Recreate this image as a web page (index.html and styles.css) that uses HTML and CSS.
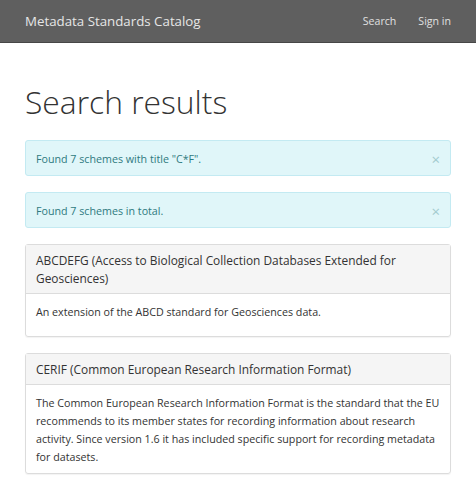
FILE: index.html
```html
<!DOCTYPE html>
<html>
<head>
<meta charset="utf-8">
<link rel="stylesheet" href="styles.css">
</head>
<body>
<nav class="navbar">
  <a class="brand" href="#">Metadata Standards Catalog</a>
  <ul class="nav">
    <li><a href="#">Search</a></li>
    <li><a href="#">Sign in</a></li>
  </ul>
</nav>
<main class="container">
  <h1 class="title">Search results</h1>
  <div class="alert"><span>Found 7 schemes with title "C*F".</span><button class="close">&times;</button></div>
  <div class="alert"><span>Found 7 schemes in total.</span><button class="close">&times;</button></div>
  <div class="panel">
    <div class="panel-heading">ABCDEFG (Access to Biological Collection Databases Extended for Geosciences)</div>
    <div class="panel-body"><p>An extension of the ABCD standard for Geosciences data.</p></div>
  </div>
  <div class="panel">
    <div class="panel-heading">CERIF (Common European Research Information Format)</div>
    <div class="panel-body panel-body-compact"><p>The Common European Research Information Format is the standard that the EU recommends to its member states for recording information about research activity. Since version 1.6 it has included specific support for recording metadata for datasets.</p></div>
  </div>
</main>
</body>
</html>
```
FILE: styles.css
```css
* { box-sizing: border-box; }
html, body { margin: 0; padding: 0; }
body {
  font-family: "Open Sans", "DejaVu Sans", sans-serif;
  font-size: 10.7px;
  line-height: 18px;
  color: #333;
  background: #fff;
}
.navbar {
  height: 43px;
  background: #5f5f5f;
  border-bottom: 1px solid #474747;
  display: flex;
  align-items: center;
  justify-content: space-between;
  padding: 0 25px;
}
.brand {
  color: #e6e6e6;
  font-size: 13.3px;
  text-decoration: none;
}
.nav {
  list-style: none;
  margin: 0;
  padding: 0;
  display: flex;
  gap: 22px;
}
.nav a {
  color: #e0e0e0;
  text-decoration: none;
  font-size: 10.6px;
}
.container {
  padding: 0 25px;
}
.title {
  font-size: 31.8px;
  font-weight: 300;
  line-height: 38px;
  margin: 40px 0 19px;
  color: #333;
}
.alert {
  display: flex;
  justify-content: space-between;
  align-items: center;
  background: #e0f6f9;
  border: 1px solid #c3eaf2;
  border-radius: 3px;
  color: #2f7a80;
  padding: 9px 10px 7px;
  margin-bottom: 16px;
}
.close {
  border: 0;
  background: none;
  padding: 0;
  font-family: inherit;
  font-size: 15px;
  line-height: 18px;
  color: #a3cbcf;
  cursor: pointer;
}
.panel {
  border: 1px solid #dcdcdc;
  border-radius: 3px;
  margin-bottom: 16px;
  box-shadow: 0 1px 1px rgba(0,0,0,.05);
}
.panel-heading {
  background: #f5f5f5;
  border-bottom: 1px solid #dcdcdc;
  padding: 6px 10px;
  font-size: 11.9px;
  line-height: 18px;
  color: #333;
}
.panel-body {
  padding: 9px 10px 15px;
}
.panel-body-compact {
  padding-bottom: 7px;
}
.panel-body p {
  margin: 0;
  line-height: 18px;
}
```
